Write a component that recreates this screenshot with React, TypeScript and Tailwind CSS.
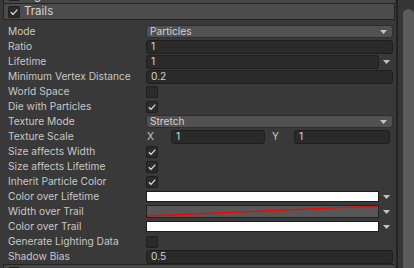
import React from "react";

const font = { fontFamily: "Inter, 'Noto Sans', sans-serif" };

function Check({ on }: { on?: boolean }) {
  return (
    <div className="flex h-[12px] w-[12px] items-center justify-center rounded-[2px] border border-[#1f1f1f] bg-[#2b2b2b]">
      {on && (
        <svg width="10" height="10" viewBox="0 0 10 10">
          <polyline points="1.8,5.2 4,7.3 8.3,2.6" fill="none" stroke="#e2e2e2" strokeWidth="1.2" />
        </svg>
      )}
    </div>
  );
}

function Arrow() {
  return (
    <svg width="7" height="4" viewBox="0 0 7 4">
      <polygon points="0,0 7,0 3.5,4" fill="#c4c4c4" />
    </svg>
  );
}

function Dropdown({ value }: { value: string }) {
  return (
    <div className="flex h-[13px] w-[247px] items-center justify-between rounded-[3px] border border-[#2e2e2e] bg-[#515151] pl-[3px] pr-[5px] text-[#d2d2d2]">
      <span>{value}</span>
      <Arrow />
    </div>
  );
}

function Input({ value, w = "w-[247px]" }: { value: string; w?: string }) {
  return (
    <div className={`flex h-[14px] items-center rounded-[3px] border border-[#1e1e1e] bg-[#2a2a2a] pl-[4px] text-[#d2d2d2] ${w}`}>
      {value}
    </div>
  );
}

function WithArrow({ children }: { children: React.ReactNode }) {
  return (
    <div className="flex w-[247px] items-center">
      <div className="w-[233px]">{children}</div>
      <div className="flex flex-1 justify-center pl-[1px]">
        <Arrow />
      </div>
    </div>
  );
}

function Gradient() {
  return <div className="h-[11px] w-[233px] border border-[#1c1c1c] bg-white" />;
}

function Curve() {
  return (
    <div className="h-[13px] w-[233px] border border-[#232323] bg-[#575757]">
      <svg width="231" height="11" viewBox="0 0 231 11" className="block">
        <polyline points="0,10 205,1.2 231,0.8" fill="none" stroke="#ff0000" strokeWidth="1.3" />
      </svg>
    </div>
  );
}

function Row({ label, children }: { label: string; children: React.ReactNode }) {
  return (
    <div className="flex h-[15px] items-center">
      <div className="w-[146px] pl-[8px] text-[#c8c8c8]">{label}</div>
      <div className="flex w-[247px] items-center">{children}</div>
    </div>
  );
}

export default function App() {
  return (
    <div
      className="flex h-[268px] w-[414px] overflow-hidden bg-[#393939] text-[10.2px] leading-none"
      style={font}
    >
      <div className="flex w-[396px] flex-col">
        {/* bottom edge of previous module header */}
        <div className="ml-[3px] mr-[1px] h-[4px] overflow-hidden rounded-b-[2px] border-b border-l border-[#232323] bg-[#474747]">
          <div className="-mt-[11px] flex items-center gap-[4px] pl-[4px]">
            <Check />
            <span className="text-[12px] text-[#d0d0d0]">Lights</span>
          </div>
        </div>

        {/* Trails header */}
        <div className="ml-[3px] mr-[1px] flex h-[16px] items-center gap-[4px] rounded-[2px] border border-t-0 border-[#232323] bg-[#4c4c4c] pl-[4px]">
          <Check on />
          <span className="text-[11.5px] text-[#d4d4d4]">Trails</span>
        </div>

        <div className="flex flex-col pt-[4px]">
          <Row label="Mode">
            <Dropdown value="Particles" />
          </Row>
          <Row label="Ratio">
            <Input value="1" />
          </Row>
          <Row label="Lifetime">
            <WithArrow>
              <Input value="1" w="w-[233px]" />
            </WithArrow>
          </Row>
          <Row label="Minimum Vertex Distance">
            <Input value="0.2" />
          </Row>
          <Row label="World Space">
            <Check />
          </Row>
          <Row label="Die with Particles">
            <Check on />
          </Row>
          <Row label="Texture Mode">
            <Dropdown value="Stretch" />
          </Row>
          <Row label="Texture Scale">
            <div className="flex items-center text-[#c8c8c8]">
              <span className="w-[25px] pl-[1px]">X</span>
              <Input value="1" w="w-[94px]" />
              <span className="w-[29px] pl-[7px]">Y</span>
              <Input value="1" w="w-[96px]" />
            </div>
          </Row>
          <Row label="Size affects Width">
            <Check on />
          </Row>
          <Row label="Size affects Lifetime">
            <Check on />
          </Row>
          <Row label="Inherit Particle Color">
            <Check on />
          </Row>
          <Row label="Color over Lifetime">
            <WithArrow>
              <Gradient />
            </WithArrow>
          </Row>
          <Row label="Width over Trail">
            <WithArrow>
              <Curve />
            </WithArrow>
          </Row>
          <Row label="Color over Trail">
            <WithArrow>
              <Gradient />
            </WithArrow>
          </Row>
          <Row label="Generate Lighting Data">
            <Check />
          </Row>
          <Row label="Shadow Bias">
            <Input value="0.5" />
          </Row>
        </div>

        {/* top edge of next module header */}
        <div className="ml-[3px] mr-[1px] flex-1 overflow-hidden rounded-t-[2px] border-l border-t border-[#232323] bg-[#474747]">
          <div className="flex items-start gap-[4px] pl-[4px] pt-[2px]">
            <Check />
            <span className="text-[12px] text-[#d0d0d0]">Custom Data</span>
          </div>
        </div>
      </div>

      {/* scrollbar */}
      <div className="flex w-[18px] border-l-2 border-[#232323] bg-[#363636] pl-[5px] pt-[9px]">
        <div className="w-[11px] rounded-t-full bg-[#5b5b5b]" />
      </div>
    </div>
  );
}
